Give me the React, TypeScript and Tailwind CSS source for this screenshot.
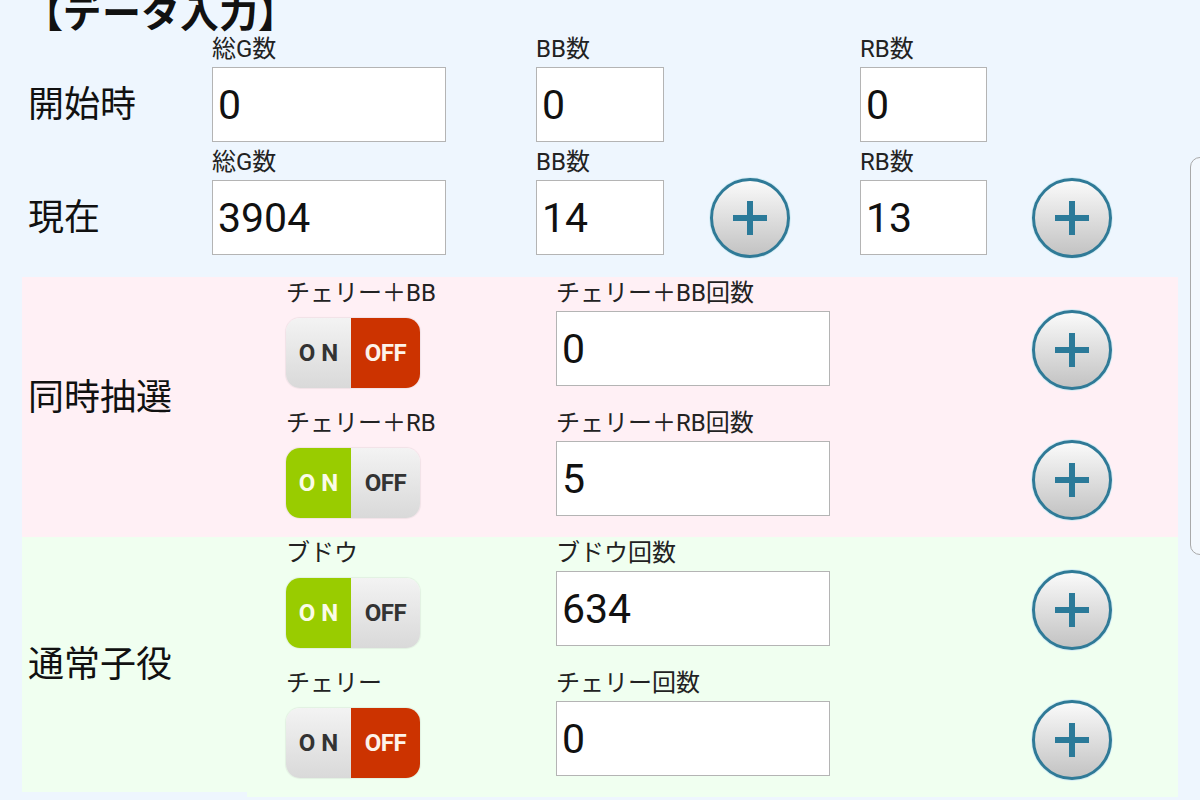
import { useState } from "react";

const FONT = { fontFamily: "Roboto, 'Noto Sans CJK JP', sans-serif" };

function PlusButton() {
  return (
    <button className="w-[80px] h-[80px] rounded-full border-[3px] border-[#2f7a97] bg-gradient-to-b from-[#fafafa] to-[#c3c3c3] flex items-center justify-center shadow-[0_0_0_1px_#d6eef6]">
      <svg width="38" height="38" viewBox="0 0 38 38">
        <path d="M19 2v34M2 19h34" stroke="#2b7a99" strokeWidth="6" />
      </svg>
    </button>
  );
}

function NumBox({ value, width }: { value: string; width: string }) {
  return (
    <div className={`${width} h-[75px] bg-white border border-[#b4b4b4] flex items-center pl-[5px]`}>
      <input
        readOnly
        value={value}
        className="w-full bg-transparent outline-none text-[41px] text-[#111] leading-none"
        style={FONT}
      />
    </div>
  );
}

function Field({ label, value, width }: { label: string; value: string; width: string }) {
  return (
    <div className="flex flex-col">
      <div className="h-[31px] text-[24px] leading-[26px] text-[#222]">{label}</div>
      <NumBox value={value} width={width} />
    </div>
  );
}

function Toggle({ on }: { on: boolean }) {
  return (
    <div className="flex w-[134px] h-[70px] rounded-[14px] overflow-hidden shadow-[0_0_1px_1px_rgba(0,0,0,0.06)]">
      <div
        className={`w-[65px] flex items-center justify-center text-[24px] font-bold tracking-[6px] pl-[6px] ${
          on ? "bg-[#99cc00] text-[#fbfbe8]" : "bg-gradient-to-b from-[#f3f3f3] to-[#d9d9d9] text-[#333]"
        }`}
      >
        ON
      </div>
      <div
        className={`w-[69px] flex items-center justify-center text-[24px] font-bold tracking-[-0.5px] ${
          on ? "bg-gradient-to-b from-[#f3f3f3] to-[#d9d9d9] text-[#333]" : "bg-[#cc3300] text-[#fdf3ea]"
        }`}
      >
        OFF
      </div>
    </div>
  );
}

interface Item {
  name: string;
  count: string;
  on: boolean;
}

function SubRow({ item }: { item: Item }) {
  const [on, setOn] = useState(item.on);
  return (
    <div className="flex h-[130px]">
      <div className="w-[270px] flex flex-col">
        <div className="h-[31px] pt-[1px] text-[24px] leading-[30px] text-[#222]">{item.name}</div>
        <div className="mt-[10px]" onClick={() => setOn(!on)}>
          <Toggle on={on} />
        </div>
      </div>
      <div className="w-[274px] flex flex-col">
        <div className="h-[31px] pt-[1px] text-[24px] leading-[30px] text-[#222]">{item.name}回数</div>
        <div className="mt-[3px]">
          <NumBox value={item.count} width="w-[274px]" />
        </div>
      </div>
      <div className="w-[202px]" />
      <div className="pt-[33px]">
        <PlusButton />
      </div>
    </div>
  );
}

function Section({ title, items, bg, cut, labelPad }: { title: string; items: Item[]; bg: string; cut?: boolean; labelPad?: string }) {
  return (
    <div className={`flex ml-[22px] w-[1156px] ${cut ? "" : bg}`}>
      <div className={`w-[225px] pl-[6px] flex items-center ${bg} ${cut ? "h-[255px] self-start" : ""} ${labelPad ?? ""}`}>
        <span className="text-[36px] text-[#111]">{title}</span>
      </div>
      <div className={`flex-1 pl-[39px] flex flex-col ${bg}`}>
        {items.map((it) => (
          <SubRow key={it.name} item={it} />
        ))}
      </div>
    </div>
  );
}

export default function App() {
  return (
    <div className="relative w-[1200px] h-[800px] overflow-hidden bg-[#eef6fe]" style={FONT}>
      <div className="h-[36px] pl-[24px] -mt-[5px] text-[39px] font-bold leading-none text-[#111]">【データ入力】</div>

      <div className="flex pl-[28px] mt-[5px]">
        <div className="w-[184px] mt-[31px] h-[75px] flex items-center text-[36px] text-[#111]">開始時</div>
        <div className="w-[324px]">
          <Field label="総G数" value="0" width="w-[234px]" />
        </div>
        <div className="w-[324px]">
          <Field label="BB数" value="0" width="w-[128px]" />
        </div>
        <Field label="RB数" value="0" width="w-[127px]" />
      </div>

      <div className="flex pl-[28px] mt-[7px]">
        <div className="w-[184px] mt-[31px] h-[75px] flex items-center text-[36px] text-[#111]">現在</div>
        <div className="w-[324px]">
          <Field label="総G数" value="3904" width="w-[234px]" />
        </div>
        <div className="w-[174px]">
          <Field label="BB数" value="14" width="w-[128px]" />
        </div>
        <div className="w-[150px] mt-[31px] h-[75px] flex items-center">
          <PlusButton />
        </div>
        <div className="w-[172px]">
          <Field label="RB数" value="13" width="w-[127px]" />
        </div>
        <div className="mt-[31px] h-[75px] flex items-center">
          <PlusButton />
        </div>
      </div>

      <div className="mt-[22px]">
        <Section
          title="同時抽選"
          bg="bg-[#fff0f5]"
          labelPad="pb-[18px]"
          items={[
            { name: "チェリー＋BB", count: "0", on: false },
            { name: "チェリー＋RB", count: "5", on: true },
          ]}
        />
        <Section
          title="通常子役"
          bg="bg-[#f0fff0]"
          cut
          items={[
            { name: "ブドウ", count: "634", on: true },
            { name: "チェリー", count: "0", on: false },
          ]}
        />
      </div>

      <div className="absolute left-[1190px] top-[157px] w-[20px] h-[398px] border border-[#a9a9a9] rounded-l-[10px] bg-[#f3f8fd]" />
    </div>
  );
}
